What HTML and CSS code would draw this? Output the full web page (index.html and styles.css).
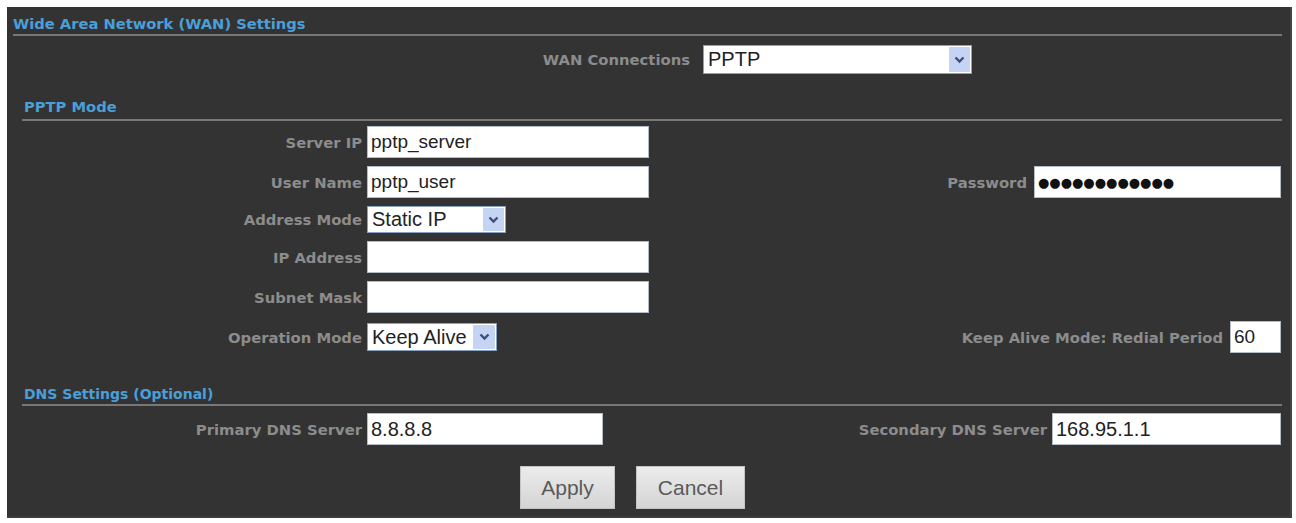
FILE: index.html
```html
<!DOCTYPE html>
<html lang="en">
<head>
  <meta charset="UTF-8" />
  <title>WAN Settings</title>
  <link rel="stylesheet" href="styles.css">
</head>
<body>

  <div class="panel">
    <div class="title">Wide Area Network (WAN) Settings</div>

    <!-- connection type -->
    <div class="wan-row">
      <label class="label">WAN Connections</label>
      <div class="select wan-select">
        <span class="value">PPTP</span>
        <span class="arrow"><svg width="11" height="8" viewBox="0 0 11 8"><path d="M1.5 1.5 L5.5 5.5 L9.5 1.5" fill="none" stroke="#3b4f7e" stroke-width="2.4"/></svg></span>
      </div>
    </div>

    <!-- PPTP -->
    <div class="section">
      <div class="title sub">PPTP Mode</div>
      <div class="rows">
        <div class="row">
          <div class="left">
            <label class="label">Server IP</label>
            <input type="text" class="field" value="pptp_server" />
          </div>
        </div>
        <div class="row">
          <div class="left">
            <label class="label">User Name</label>
            <input type="text" class="field" value="pptp_user" />
          </div>
          <div class="right">
            <label class="label">Password</label>
            <input type="text" class="field pass" value="&#9679;&#9679;&#9679;&#9679;&#9679;&#9679;&#9679;&#9679;&#9679;&#9679;&#9679;&#9679;" />
          </div>
        </div>
        <div class="row">
          <div class="left">
            <label class="label">Address Mode</label>
            <div class="select addr-select">
              <span class="value">Static IP</span>
              <span class="arrow"><svg width="11" height="8" viewBox="0 0 11 8"><path d="M1.5 1.5 L5.5 5.5 L9.5 1.5" fill="none" stroke="#3b4f7e" stroke-width="2.4"/></svg></span>
            </div>
          </div>
        </div>
        <div class="row">
          <div class="left">
            <label class="label">IP Address</label>
            <input type="text" class="field" value="" />
          </div>
        </div>
        <div class="row">
          <div class="left">
            <label class="label">Subnet Mask</label>
            <input type="text" class="field" value="" />
          </div>
        </div>
        <div class="row">
          <div class="left">
            <label class="label">Operation Mode</label>
            <div class="select op-select">
              <span class="value">Keep Alive</span>
              <span class="arrow"><svg width="11" height="8" viewBox="0 0 11 8"><path d="M1.5 1.5 L5.5 5.5 L9.5 1.5" fill="none" stroke="#3b4f7e" stroke-width="2.4"/></svg></span>
            </div>
          </div>
          <div class="right">
            <label class="label">Keep Alive Mode: Redial Period</label>
            <input type="text" class="field period" value="60" />
          </div>
        </div>
      </div>
    </div>

    <!-- DNS -->
    <div class="section dns">
      <div class="title sub">DNS Settings (Optional)</div>
      <div class="row dns-row">
        <div class="left">
          <label class="label">Primary DNS Server</label>
          <input type="text" class="field" value="8.8.8.8" />
        </div>
        <div class="right">
          <label class="label">Secondary DNS Server</label>
          <input type="text" class="field" value="168.95.1.1" />
        </div>
      </div>
    </div>

    <div class="buttons">
      <button class="btn apply">Apply</button>
      <button class="btn cancel">Cancel</button>
    </div>
  </div>

</body>
</html>
```

FILE: styles.css
```css
* {
  box-sizing: border-box;
  margin: 0;
  padding: 0;
}

body {
  background: #fff;
  margin: 7px 4px 0 7px;
  font-family: 'DejaVu Sans', Verdana, sans-serif;
}

/* Panel */
.panel {
  background: #333;
  height: 511px;
  padding: 8px 8px 8px 6px;
  border-right: 2px solid #444;
  border-bottom: 2px solid #3c3c3c;
}

.title {
  color: #4a9fd8;
  font-weight: bold;
  font-size: 14.7px;
  line-height: 18px;
  padding-bottom: 1px;
  border-bottom: 2px solid #777;
}

.title.sub {
  padding-left: 2px;
  padding-bottom: 3px;
}

.label {
  color: #8c8c8c;
  font-weight: bold;
  font-size: 14.8px;
  white-space: nowrap;
}

/* WAN connection */
.wan-row {
  display: grid;
  grid-template-columns: 677px 269px;
  gap: 13px;
  align-items: center;
  margin-top: 9px;
}

.wan-row .label {
  text-align: right;
}

/* Select boxes */
.select {
  display: flex;
  align-items: center;
  justify-content: space-between;
  background: #fff;
  border: 1px solid #8aa0c0;
  padding: 1px;
  font-family: 'Liberation Sans', Arial, sans-serif;
  font-size: 20px;
  color: #222;
}

.select .value {
  padding-left: 3px;
}

.select .arrow {
  display: flex;
  align-items: center;
  justify-content: center;
  width: 21px;
  align-self: stretch;
  background: #c6d4f3;
  border-radius: 1px;
}

.wan-select {
  height: 29px;
}

.addr-select {
  width: 139px;
  height: 27px;
}

.op-select {
  width: 130px;
  height: 28px;
}

.op-select .arrow {
  width: 22px;
}

/* Sections */
.section {
  margin-left: 9px;
}

.section .title {
  margin-top: 24px;
}

.rows {
  display: flex;
  flex-direction: column;
  gap: 8px;
  margin-top: 5px;
}

.row {
  display: flex;
  align-items: center;
}

.left {
  display: grid;
  grid-template-columns: 340px 282px;
  gap: 5px;
  align-items: center;
}

.left .label {
  text-align: right;
}

.right {
  flex: 1;
  display: flex;
  justify-content: flex-end;
  align-items: center;
  gap: 7px;
  padding-right: 1px;
}

.field {
  height: 32px;
  border: 1px solid #b4bcc8;
  background: #fff;
  padding: 0 3px;
  font-family: 'Liberation Sans', Arial, sans-serif;
  font-size: 19px;
  color: #222;
  outline: none;
}

.left .field {
  width: 282px;
}

.right .field {
  width: 247px;
}

.right .field.pass {
  font-family: 'DejaVu Sans', sans-serif;
  font-size: 13px;
  color: #111;
}

.right .field.period {
  width: 51px;
}

/* DNS */
.dns .title {
  margin-top: 32px;
  padding-bottom: 1px;
  font-size: 14px;
}

.dns-row {
  margin-top: 7px;
}

.dns .left {
  grid-template-columns: 340px 236px;
}

.dns .left .field {
  width: 236px;
}

.dns .right {
  gap: 5px;
}

.dns .right .field {
  width: 229px;
}

.dns .field {
  font-size: 20px;
}

/* Buttons */
.buttons {
  display: flex;
  justify-content: center;
  gap: 21px;
  margin-top: 21px;
  padding-right: 30px;
}

.btn {
  height: 43px;
  border: 1px solid #c4c4c4;
  background: linear-gradient(#ececec, #d4d4d4);
  color: #5a5a5a;
  font-family: 'Liberation Sans', Arial, sans-serif;
  font-size: 21px;
  cursor: pointer;
}

.btn.apply {
  width: 95px;
}

.btn.cancel {
  width: 109px;
}
```
